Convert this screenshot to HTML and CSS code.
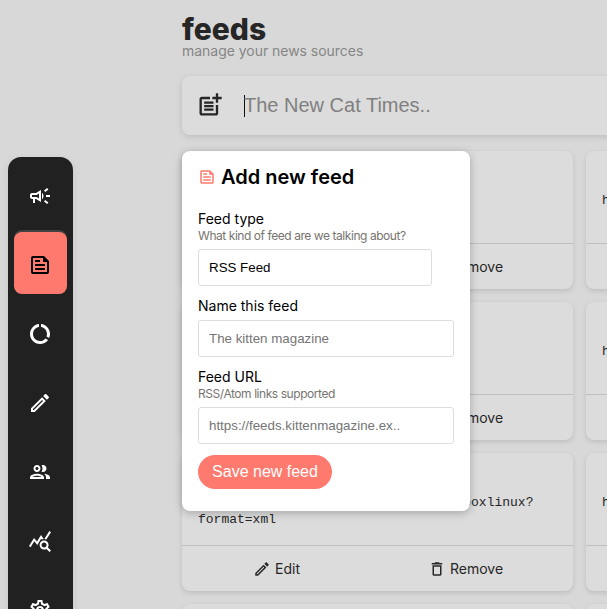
FILE: index.html
```html
<!DOCTYPE html>
<html lang="en">
<head>
<meta charset="utf-8">
<title>feeds</title>
<link rel="stylesheet" href="styles.css">
</head>
<body>
<svg class="defs" width="0" height="0">
  <symbol id="feed" viewBox="0 0 24 24"><path d="M16 3H5c-1.1 0-2 .9-2 2v14c0 1.1.9 2 2 2h14c1.1 0 2-.9 2-2V8l-5-5zm3 16H5V5h10v4h4v10zM7 17h10v-2H7v2zm5-10H7v2h5V7zm-5 6h10v-2H7v2z"/></symbol>
  <symbol id="edit" viewBox="0 0 24 24"><path d="M14.06 9.02l.92.92L5.92 19H5v-.92l9.06-9.06M17.66 3c-.25 0-.51.1-.7.29l-1.83 1.83 3.75 3.75 1.83-1.83c.39-.39.39-1.02 0-1.41l-2.34-2.34c-.2-.2-.45-.29-.71-.29zm-3.6 3.19L3 17.25V21h3.75L17.81 9.94l-3.75-3.75z"/></symbol>
  <symbol id="trash" viewBox="0 0 24 24"><path d="M16 9v10H8V9h8m-1.5-6h-5l-1 1H5v2h14V4h-3.5l-1-1zM18 7H6v12c0 1.1.9 2 2 2h8c1.1 0 2-.9 2-2V7z"/></symbol>
</svg>
<nav class="sidebar">
  <a class="item"><svg viewBox="0 0 24 24"><path d="M18 11v2h4v-2h-4zM16 17.61c.96.71 2.21 1.65 3.2 2.39.4-.53.8-1.07 1.2-1.6-.99-.74-2.24-1.68-3.2-2.4-.4.54-.8 1.08-1.2 1.61zM20.4 5.6C20 5.07 19.6 4.53 19.2 4c-.99.74-2.24 1.68-3.2 2.4.4.53.8 1.07 1.2 1.6.96-.72 2.21-1.65 3.2-2.4zM4 9c-1.1 0-2 .9-2 2v2c0 1.1.9 2 2 2h1v4h2v-4h1l5 3V6L8 9H4zm5.03 1.71L11 9.53v4.94l-1.97-1.18-.48-.29H4v-2h4.55l.48-.29zM15.5 12c0-1.33-.58-2.53-1.5-3.35v6.69c.92-.81 1.5-2.01 1.5-3.34z"/></svg></a>
  <a class="item active"><svg><use href="#feed"/></svg></a>
  <a class="item"><svg viewBox="0 0 24 24"><path d="M13 2.05v3.03c3.39.49 6 3.39 6 6.92 0 .9-.18 1.75-.48 2.54l2.6 1.53c.56-1.24.88-2.62.88-4.07 0-5.18-3.95-9.45-9-9.95zM12 19c-3.87 0-7-3.13-7-7 0-3.53 2.61-6.43 6-6.92V2.05c-5.06.5-9 4.76-9 9.95 0 5.52 4.47 10 9.99 10 3.31 0 6.24-1.61 8.06-4.09l-2.6-1.53C16.17 17.98 14.21 19 12 19z"/></svg></a>
  <a class="item"><svg><use href="#edit"/></svg></a>
  <a class="item"><svg viewBox="0 0 24 24"><path d="M9 13.75c-2.34 0-7 1.17-7 3.5V19h14v-1.75c0-2.33-4.66-3.5-7-3.5zM4.34 17c.84-.58 2.87-1.25 4.66-1.25s3.82.67 4.66 1.25H4.34zM9 12c1.93 0 3.5-1.57 3.5-3.5S10.93 5 9 5 5.5 6.57 5.5 8.5 7.07 12 9 12zm0-5c.83 0 1.5.67 1.5 1.5S9.83 10 9 10s-1.5-.67-1.5-1.5S8.17 7 9 7zm7.04 6.81c1.16.84 1.96 1.96 1.96 3.44V19h4v-1.75c0-2.02-3.5-3.17-5.96-3.44zM15 12c1.93 0 3.5-1.57 3.5-3.5S16.93 5 15 5c-.54 0-1.04.13-1.5.35.63.89 1 1.98 1 3.15s-.37 2.26-1 3.15c.46.22.96.35 1.5.35z"/></svg></a>
  <a class="item"><svg viewBox="0 0 24 24"><path d="M19.88 18.47c.44-.7.7-1.51.7-2.39 0-2.49-2.01-4.5-4.5-4.5s-4.5 2.01-4.5 4.5 2.01 4.5 4.49 4.5c.88 0 1.7-.26 2.39-.7L21.58 23 23 21.58l-3.12-3.11zm-3.8.11c-1.38 0-2.5-1.12-2.5-2.5s1.12-2.5 2.5-2.5 2.5 1.12 2.5 2.5-1.12 2.5-2.5 2.5zm-.36-8.5c-.74.02-1.45.18-2.1.45l-.55-.83-3.8 6.18-3.01-3.52-3.63 5.81L1 17l5-8 3 3.5L13 6l2.72 4.08zm2.59.5c-.64-.28-1.33-.45-2.05-.49L21.38 2 23 3.18l-4.69 7.4z"/></svg></a>
  <a class="item"><svg viewBox="0 0 24 24"><path d="M19.43 12.98c.04-.32.07-.64.07-.98s-.03-.66-.07-.98l2.11-1.65c.19-.15.24-.42.12-.64l-2-3.46c-.09-.16-.26-.25-.44-.25-.06 0-.12.01-.17.03l-2.49 1c-.52-.4-1.08-.73-1.69-.98l-.38-2.65C14.46 2.18 14.25 2 14 2h-4c-.25 0-.46.18-.49.42l-.38 2.65c-.61.25-1.17.59-1.69.98l-2.49-1c-.06-.02-.12-.03-.18-.03-.17 0-.34.09-.43.25l-2 3.46c-.13.22-.07.49.12.64l2.11 1.65c-.04.32-.07.65-.07.98s.03.66.07.98l-2.11 1.65c-.19.15-.24.42-.12.64l2 3.46c.09.16.26.25.44.25.06 0 .12-.01.17-.03l2.49-1c.52.4 1.08.73 1.69.98l.38 2.65c.03.24.24.42.49.42h4c.25 0 .46-.18.49-.42l.38-2.65c.61-.25 1.17-.59 1.69-.98l2.49 1c.06.02.12.03.18.03.17 0 .34-.09.43-.25l2-3.46c.12-.22.07-.49-.12-.64l-2.11-1.65zm-1.98-1.71c.04.31.05.52.05.73s-.02.43-.05.73l-.14 1.13.89.7 1.08.84-.7 1.21-1.27-.51-1.04-.42-.9.68c-.43.32-.84.56-1.25.73l-1.06.43-.16 1.13-.2 1.35h-1.4l-.19-1.35-.16-1.13-1.06-.43c-.43-.18-.83-.41-1.23-.71l-.91-.7-1.06.43-1.27.51-.7-1.21 1.08-.84.89-.7-.14-1.13c-.03-.31-.05-.54-.05-.74s.02-.43.05-.73l.14-1.13-.89-.7-1.08-.84.7-1.21 1.27.51 1.04.42.9-.68c.43-.32.84-.56 1.25-.73l1.06-.43.16-1.13.2-1.35h1.39l.19 1.35.16 1.13 1.06.43c.43.18.83.41 1.23.71l.91.7 1.06-.43 1.27-.51.7 1.21-1.07.85-.89.7.14 1.13zM12 8c-2.21 0-4 1.79-4 4s1.79 4 4 4 4-1.79 4-4-1.79-4-4-4zm0 6c-1.1 0-2-.9-2-2s.9-2 2-2 2 .9 2 2-.9 2-2 2z"/></svg></a>
</nav>
<main class="page">
  <header>
    <h1>feeds</h1>
    <p class="subtitle">manage your news sources</p>
  </header>
  <div class="addbar">
    <svg viewBox="0 0 24 24"><path d="M17 19H5V7h7V5H5c-1.1 0-2 .9-2 2v12c0 1.1.9 2 2 2h12c1.1 0 2-.9 2-2v-7h-2v7z"/><path d="M19 2h-2v3h-3v2h3v3h2V7h3V5h-3V2zM7 9h8v2H7zM7 12h8v2H7zM7 15h8v2H7z"/></svg>
    <span class="caret"></span><span>The New Cat Times..</span>
  </div>
  <div class="board">
    <div class="cards">
      <article class="card"><div class="url"></div><footer><span class="action"><svg><use href="#edit"/></svg>Edit</span><span class="action"><svg><use href="#trash"/></svg>Remove</span></footer></article>
      <article class="card"><div class="url">https://</div><footer></footer></article>
      <article class="card"><div class="url"></div><footer><span class="action"><svg><use href="#edit"/></svg>Edit</span><span class="action"><svg><use href="#trash"/></svg>Remove</span></footer></article>
      <article class="card"><div class="url">https://</div><footer></footer></article>
      <article class="card"><div class="url">https://www.reddit.com/user/myvoidboxlinux?<br>format=xml</div><footer><span class="action"><svg><use href="#edit"/></svg>Edit</span><span class="action"><svg><use href="#trash"/></svg>Remove</span></footer></article>
      <article class="card"><div class="url">https://</div><footer></footer></article>
      <article class="card"></article>
      <article class="card"></article>
    </div>
    <form class="dialog">
      <h2><svg><use href="#feed"/></svg>Add new feed</h2>
      <label>Feed type</label>
      <small>What kind of feed are we talking about?</small>
      <div class="field select">RSS Feed</div>
      <label>Name this feed</label>
      <div class="field hint">The kitten magazine</div>
      <label>Feed URL</label>
      <small>RSS/Atom links supported</small>
      <div class="field hint">https://feeds.kittenmagazine.ex..</div>
      <button type="button">Save new feed</button>
    </form>
  </div>
</main>
</body>
</html>
```
FILE: styles.css
```css
* { box-sizing: border-box; }
html { height: 100%; overflow: hidden; }
body {
  margin: 0;
  height: 609px;
  overflow: hidden;
  display: flex;
  align-items: flex-start;
  background: #d8d8d8;
  color: #262626;
  font-family: Inter, sans-serif;
  font-size: 14px;
}
.defs { position: absolute; }
svg { fill: currentColor; flex: none; }
h1, h2, p { margin: 0; }

.sidebar {
  flex: none;
  width: 65px;
  height: 520px;
  margin: 157px 0 0 8px;
  padding: 6px;
  display: flex;
  flex-direction: column;
  gap: 7px;
  background: #212121;
  border-radius: 13px;
  box-shadow: 0 3px 10px rgba(0, 0, 0, .08);
  color: #fff;
}
.item {
  flex: none;
  height: 62px;
  padding: 4px 1px 0 0;
  display: flex;
  align-items: center;
  justify-content: center;
  border-radius: 8px;
}
.item svg { width: 24px; height: 24px; }
.item.active { background: #ff7a6e; color: #000; box-shadow: 0 -2px 0 #414141; }

.page { flex: none; width: 795px; margin-left: 109px; padding-top: 10px; }
h1 { font-size: 30px; line-height: 38px; font-weight: 800; }
.subtitle { margin-top: -6px; line-height: 18px; color: #868686; letter-spacing: -.03px; }
.addbar {
  height: 59px;
  margin-top: 16px;
  padding-left: 14px;
  display: flex;
  align-items: center;
  background: #dcdcdc;
  border-radius: 8px;
  box-shadow: 0 2px 6px rgba(0, 0, 0, .12);
  color: #808080;
  font: 20px "Liberation Sans", sans-serif;
}
.addbar svg { width: 28px; height: 28px; margin-top: -2px; color: #262626; }
.caret { width: 1px; height: 22px; margin: 0 -1px 0 20px; background: #111; }

.board { position: relative; margin-top: 16px; }
.cards { display: grid; grid-template-columns: 391px 391px; gap: 13px; }
.card {
  height: 138px;
  background: #dcdcdc;
  border-radius: 8px;
  box-shadow: 0 2px 5px rgba(0, 0, 0, .12);
}
.url {
  height: 92px;
  padding: 41px 16px 0;
  font: 13px/17px "Liberation Mono", monospace;
  white-space: nowrap;
}
.card footer {
  height: 46px;
  display: flex;
  align-items: center;
  border-top: 1px solid #bfbfbf;
}
.action { width: 189px; display: flex; align-items: center; justify-content: center; gap: 4px; }
.action svg { width: 18px; height: 18px; }

.dialog {
  position: absolute;
  top: 0;
  left: 0;
  width: 288px;
  height: 360px;
  padding: 14px 16px;
  background: #fff;
  border-radius: 8px;
  box-shadow: 0 2px 8px rgba(0, 0, 0, .25);
  color: #000;
}
.dialog h2 {
  display: flex;
  align-items: center;
  gap: 5px;
  height: 24px;
  margin-bottom: 21px;
  font-size: 20px;
  font-weight: 600;
}
.dialog h2 svg { width: 18px; height: 18px; color: #ff7a6e; }
.dialog label { display: block; line-height: 18px; }
.dialog small { display: block; line-height: 16px; font-size: 12px; letter-spacing: -.44px; color: #77746f; }
.field {
  height: 37px;
  margin: 5px 0 11px;
  padding: 0 10px;
  border: 1px solid #ddd;
  border-radius: 3px;
  font: 13.33px/35px "Liberation Sans", sans-serif;
}
.select { width: 234px; }
.hint { color: #757575; }
.dialog button {
  display: block;
  width: 134px;
  height: 34px;
  padding: 0;
  border: 0;
  border-radius: 17px;
  background: #ff7a6e;
  color: #fff;
  font: 16px "Liberation Sans", sans-serif;
}
```
